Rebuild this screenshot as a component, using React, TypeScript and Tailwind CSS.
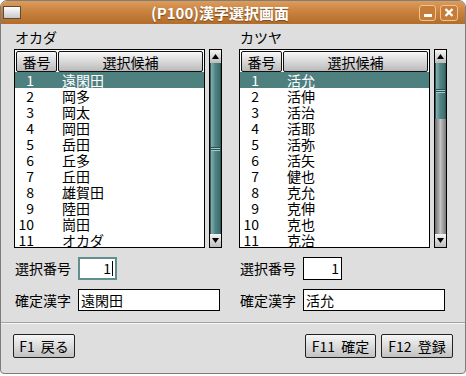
import type React from "react"

const leftItems = ["遠閑田", "岡多", "岡太", "岡田", "岳田", "丘多", "丘田", "雄賀田", "陸田", "崗田", "オカダ"]
const rightItems = ["活允", "活伸", "活治", "活耶", "活弥", "活矢", "健也", "克允", "克伸", "克也", "克治"]

const Arrow: React.FC<{ up?: boolean }> = ({ up }) => (
  <div className="flex h-[13px] w-full items-center justify-center bg-linear-to-b from-[#f4f4f4] to-[#bdbdbd]">
    <svg width="7" height="5" viewBox="0 0 7 5">
      {up ? <path d="M3.5 0L7 5H0Z" fill="#000" /> : <path d="M0 0H7L3.5 5Z" fill="#000" />}
    </svg>
  </div>
)

const Thumb: React.FC<{ className: string }> = ({ className }) => (
  <div className={`flex items-center border-x border-[#2e5858] bg-linear-to-r from-[#86afaf] via-[#4f8383] to-[#3d6e6e] ${className}`}>
    <div className="w-full">
      <div className="h-px bg-[#2a4f4f]" />
      <div className="h-px bg-[#a8caca]" />
      <div className="h-px bg-[#2a4f4f]" />
      <div className="h-px bg-[#a8caca]" />
    </div>
  </div>
)

const ScrollBar: React.FC<{ full: boolean }> = ({ full }) => (
  <div className="flex h-[199px] w-[13px] flex-col border border-black bg-[#a0a0a0]">
    <Arrow up />
    {full ? (
      <Thumb className="flex-1" />
    ) : (
      <>
        <Thumb className="h-[56px]" />
        <div className="flex-1 bg-linear-to-r from-[#6f6f6f] via-[#c4c4c4] to-[#7a7a7a]" />
      </>
    )}
    <Arrow />
  </div>
)

const HeaderCell: React.FC<{ children: React.ReactNode; className: string }> = ({ children, className }) => (
  <div
    className={`flex h-[21px] items-center justify-center rounded-[2px] border border-[#111] bg-linear-to-b from-[#f8f8f8] to-[#bababa] leading-none ${className}`}
  >
    {children}
  </div>
)

const Panel: React.FC<{
  title: string
  items: string[]
  full: boolean
  focused: boolean
}> = ({ title, items, full, focused }) => (
  <div className="flex w-[208px] flex-col">
    <div className="h-[16px] pl-[1px] leading-[16px]">{title}</div>
    <div className="mt-[4px] flex gap-[4px]">
      <div className="h-[199px] flex-1 overflow-hidden border border-black bg-white">
        <div className="flex gap-[1px] px-px pt-px">
          <HeaderCell className="w-[41px]">番号</HeaderCell>
          <HeaderCell className="flex-1">選択候補</HeaderCell>
        </div>
        <div>
          {items.map((item, i) => (
            <div
              key={i}
              className={`flex h-[16px] items-center leading-[16px] ${i === 0 ? "bg-[#4e8080] text-white" : ""}`}
            >
              <span className="w-[19px] text-right">{i + 1}</span>
              <span className="ml-[28px]">{item}</span>
            </div>
          ))}
        </div>
      </div>
      <ScrollBar full={full} />
    </div>
    <div className="mt-[9px] flex items-center">
      <span className="w-[64px] pl-[1px]">選択番号</span>
      <div
        className={`flex h-[23px] w-[39px] items-center justify-end bg-white pr-[2px] ${
          focused ? "border-2 border-[#5f8f8f]" : "border border-black"
        }`}
      >
        1{focused && <span className="ml-px h-[15px] w-px bg-black" />}
      </div>
    </div>
    <div className="mt-[9px] flex items-center">
      <span className="w-[64px] pl-[1px]">確定漢字</span>
      <div className="flex h-[22px] w-[142px] items-center border border-black bg-white pl-[2px]">{items[0]}</div>
    </div>
  </div>
)

const Button: React.FC<{ keyName: string; label: string; className: string }> = ({ keyName, label, className }) => (
  <div
    className={`flex h-[24px] items-center justify-center rounded-[2px] border border-[#222] bg-linear-to-b from-[#f6f6f6] to-[#c2c2c2] ${className}`}
  >
    <span>{keyName}</span>
    <span className="ml-[6px]">{label}</span>
  </div>
)

export default function App() {
  return (
    <div className="h-[376px] w-[466px] bg-white font-['Noto_Sans_CJK_JP',sans-serif] text-[14px] text-black">
      <div className="flex h-[374px] flex-col overflow-hidden rounded-t-[7px] rounded-b-[4px] border border-[#7d7d7d] bg-[#dedede]">
        <div className="flex h-[23px] items-center bg-linear-to-b from-[#dc9c5a] via-[#c8803c] to-[#b26d2b] px-[2px]">
          <div className="h-[13px] w-[18px] border border-[#5a4a3a] bg-linear-to-b from-white to-[#c9c9c9]" />
          <div className="flex-1 text-center text-[15px] font-bold leading-none text-white [text-shadow:0_1px_1px_#7a4a1a]">
            (P100)漢字選択画面
          </div>
          <div className="flex gap-[4px] pr-[5px]">
            <div className="flex h-[16px] w-[17px] items-end justify-center rounded-[3px] border border-[#f1c48f] bg-[#c57d39] pb-[3px]">
              <div className="h-[3px] w-[8px] bg-white" />
            </div>
            <div className="flex h-[16px] w-[18px] items-center justify-center rounded-[3px] border border-[#f1c48f] bg-[#c57d39]">
              <svg width="10" height="9" viewBox="0 0 10 9">
                <path d="M1.5 1L8.5 8M8.5 1L1.5 8" stroke="#fff" strokeWidth="2.4" />
              </svg>
            </div>
          </div>
        </div>
        <div className="flex gap-[17px] pl-[13px] pt-[5px]">
          <Panel title="オカダ" items={leftItems} full focused />
          <Panel title="カツヤ" items={rightItems} full={false} focused={false} />
        </div>
        <div className="mt-[11px] h-px bg-[#a3a3a3]" />
        <div className="h-px bg-[#f6f6f6]" />
        <div className="mt-[10px] flex px-[12px]">
          <Button keyName="F1" label="戻る" className="w-[62px]" />
          <div className="flex-1" />
          <div className="flex gap-[5px]">
            <Button keyName="F11" label="確定" className="w-[71px]" />
            <Button keyName="F12" label="登録" className="w-[72px]" />
          </div>
        </div>
      </div>
    </div>
  )
}
